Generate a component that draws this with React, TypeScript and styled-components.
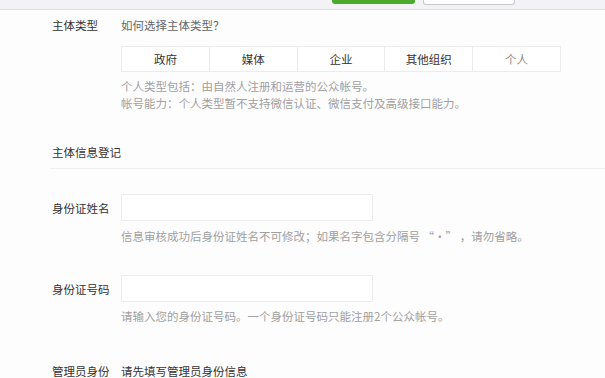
import React from "react";
import styled, { createGlobalStyle } from "styled-components";

const Global = createGlobalStyle`
  html, body { margin: 0; padding: 0; background: #fefdfe; }
  body { font-family: "Noto Sans CJK SC", "Noto Sans", sans-serif; font-size: 11.5px; color: #353535; }
`;

const Page = styled.div`
  width: 605px;
  height: 378px;
  overflow: hidden;
  background: #fefdfe;
`;

const TopBar = styled.div`
  height: 9px;
  background: #f3f3f6;
  border-bottom: 1px solid #dedee2;
  display: flex;
  align-items: flex-start;
  padding-left: 332px;
  gap: 8px;
`;

const TopButton = styled.div<{ $primary?: boolean }>`
  width: ${(p) => (p.$primary ? 83 : 92)}px;
  height: ${(p) => (p.$primary ? 4 : 5)}px;
  border-radius: 0 0 3px 3px;
  background: ${(p) => (p.$primary ? "#4aaa2b" : "#ffffff")};
  border: ${(p) => (p.$primary ? "none" : "1px solid #c9c9cc")};
  border-top: none;
  box-sizing: border-box;
`;

const Row = styled.div<{ $top: number }>`
  display: flex;
  align-items: center;
  margin-top: ${(p) => p.$top}px;
`;

const Label = styled.div`
  width: 121px;
  padding-left: 52px;
  box-sizing: border-box;
  flex-shrink: 0;
  white-space: nowrap;
  line-height: 16px;
  color: #333;
`;

const Text = styled.div<{ $dark?: boolean }>`
  line-height: 16px;
  white-space: nowrap;
  color: ${(p) => (p.$dark ? "#333" : "#666")};
`;

const Indented = styled.div<{ $top: number }>`
  margin-left: 121px;
  margin-top: ${(p) => p.$top}px;
`;

const Tabs = styled.div`
  display: flex;
  width: 440px;
  height: 26px;
  border: 1px solid #ececef;
  box-sizing: border-box;
  background: #fff;
`;

const Tab = styled.div<{ $muted?: boolean }>`
  flex: 1;
  display: flex;
  align-items: center;
  justify-content: center;
  color: ${(p) => (p.$muted ? "#8a8a8a" : "#333")};
  & + & { border-left: 1px solid #ececef; }
`;

const Hint = styled.div`
  line-height: 17px;
  white-space: nowrap;
  color: #a0a0a0;
`;

const SectionTitle = styled.div`
  margin-top: 32px;
  padding-left: 52px;
  line-height: 16px;
  color: #333;
`;

const Divider = styled.div`
  margin: 8px 0 0 50px;
  height: 1px;
  background: #f0eff3;
`;

const Input = styled.div`
  width: 252px;
  height: 27px;
  box-sizing: border-box;
  border: 1px solid #ededf0;
  background: #fff;
`;

const tabs = ["政府", "媒体", "企业", "其他组织", "个人"];

export default function App() {
  return (
    <Page>
      <Global />
      <TopBar>
        <TopButton $primary />
        <TopButton />
      </TopBar>
      <Row $top={7}>
        <Label>主体类型</Label>
        <Text>如何选择主体类型？</Text>
      </Row>
      <Indented $top={13}>
        <Tabs>
          {tabs.map((t, i) => (
            <Tab key={t} $muted={i === 4}>{t}</Tab>
          ))}
        </Tabs>
      </Indented>
      <Indented $top={6}>
        <Hint>个人类型包括：由自然人注册和运营的公众帐号。</Hint>
        <Hint>帐号能力：个人类型暂不支持微信认证、微信支付及高级接口能力。</Hint>
      </Indented>
      <SectionTitle>主体信息登记</SectionTitle>
      <Divider />
      <Row $top={25}>
        <Label>身份证姓名</Label>
        <Input />
      </Row>
      <Indented $top={7}>
        <Hint>信息审核成功后身份证姓名不可修改；如果名字包含分隔号 “·” ，请勿省略。</Hint>
      </Indented>
      <Row $top={30}>
        <Label>身份证号码</Label>
        <Input />
      </Row>
      <Indented $top={6}>
        <Hint>请输入您的身份证号码。一个身份证号码只能注册2个公众帐号。</Hint>
      </Indented>
      <Row $top={38}>
        <Label>管理员身份</Label>
        <Text $dark>请先填写管理员身份信息</Text>
      </Row>
    </Page>
  );
}
